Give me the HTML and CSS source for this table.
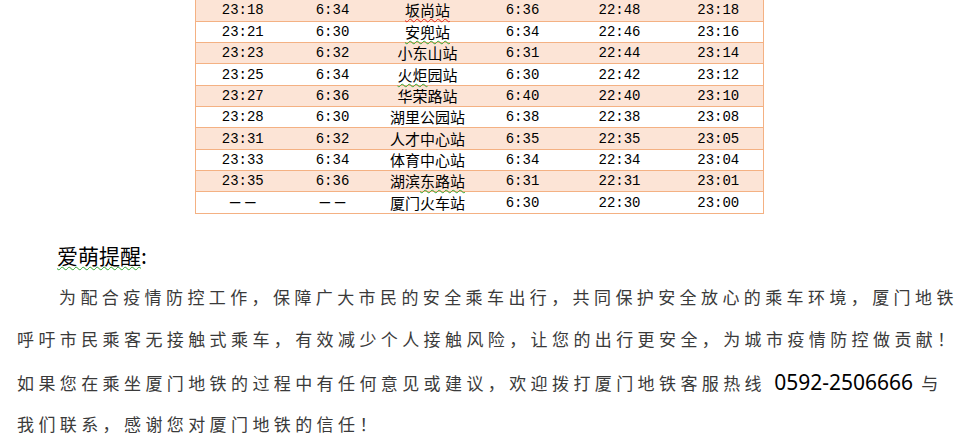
FILE: index.html
```html
<!DOCTYPE html>
<html lang="zh-CN">
<head>
<meta charset="utf-8">
<title>厦门地铁末班车时刻</title>
<link rel="stylesheet" href="styles.css">
</head>
<body>
<div class="page">
  <table class="schedule">
    <colgroup>
      <col class="c1"><col class="c2"><col class="c3"><col class="c4"><col class="c5"><col class="c6">
    </colgroup>
    <tbody>
      <tr class="shade"><td>23:18</td><td>6:34</td><td class="stn"><span class="spell-red">坂尚站</span></td><td>6:36</td><td>22:48</td><td>23:18</td></tr>
      <tr><td>23:21</td><td>6:30</td><td class="stn"><span class="spell-green">安兜站</span></td><td>6:34</td><td>22:46</td><td>23:16</td></tr>
      <tr class="shade"><td>23:23</td><td>6:32</td><td class="stn">小东山站</td><td>6:31</td><td>22:44</td><td>23:14</td></tr>
      <tr><td>23:25</td><td>6:34</td><td class="stn"><span class="spell-green">火炬</span>园站</td><td>6:30</td><td>22:42</td><td>23:12</td></tr>
      <tr class="shade"><td>23:27</td><td>6:36</td><td class="stn">华荣路站</td><td>6:40</td><td>22:40</td><td>23:10</td></tr>
      <tr><td>23:28</td><td>6:30</td><td class="stn">湖里公园站</td><td>6:38</td><td>22:38</td><td>23:08</td></tr>
      <tr class="shade"><td>23:31</td><td>6:32</td><td class="stn">人才中心站</td><td>6:35</td><td>22:35</td><td>23:05</td></tr>
      <tr><td>23:33</td><td>6:34</td><td class="stn">体育中心站</td><td>6:34</td><td>22:34</td><td>23:04</td></tr>
      <tr class="shade"><td>23:35</td><td>6:36</td><td class="stn">湖滨<span class="spell-green">东路站</span></td><td>6:31</td><td>22:31</td><td>23:01</td></tr>
      <tr><td><span class="dash">——</span></td><td><span class="dash">——</span></td><td class="stn">厦门火车站</td><td>6:30</td><td>22:30</td><td>23:00</td></tr>
    </tbody>
  </table>

  <h2 class="tip-title"><span class="spell-green">爱萌提醒</span>:</h2>
  <p class="tip indent">为配合疫情防控工作，保障广大市民的安全乘车出行，共同保护安全放心的乘车环境，厦门地铁<br>呼吁市民乘客无接触式乘车，有效减少个人接触风险，让您的出行更安全，为城市疫情防控做贡献！</p>
  <p class="tip second">如果您在乘坐厦门地铁的过程中有任何意见或建议，欢迎拨打厦门地铁客服热线 <span class="phone">0592-2506666</span> 与<br>我们联系，感谢您对厦门地铁的信任！</p>
</div>
</body>
</html>
```
FILE: styles.css
```css
html, body {
  margin: 0;
  padding: 0;
  background: #ffffff;
}

.page {
  width: 968px;
  height: 448px;
  overflow: hidden;
}

.schedule {
  margin: 0 0 0 195px;
  width: 568px;
  table-layout: fixed;
  border-collapse: collapse;
  border-left: 1px solid #f4b183;
  border-right: 1px solid #f4b183;
  font-family: "Liberation Mono", monospace;
  font-size: 14px;
  color: #000;
}

.c1 { width: 94px; }
.c2 { width: 86px; }
.c3 { width: 104px; }
.c4 { width: 86px; }
.c5 { width: 108px; }
.c6 { width: 90px; }

.schedule tr {
  height: 21.33px;
}

.schedule td {
  padding: 0;
  text-align: center;
  vertical-align: middle;
  border-bottom: 1px solid #f4b183;
  line-height: 18px;
  white-space: nowrap;
}

.schedule tr.shade td {
  background: #fce4d6;
}

.schedule td.stn {
  font-family: "Noto Sans CJK SC", sans-serif;
  font-size: 15px;
}

.dash {
  font-family: "Liberation Mono", monospace;
  font-size: 17px;
  letter-spacing: 5px;
  padding-left: 5px;
}

.spell-red {
  text-decoration: underline wavy #e0261b;
  text-decoration-thickness: 1px;
  text-underline-offset: 2px;
}

.spell-green {
  text-decoration: underline wavy #2fa52f;
  text-decoration-thickness: 1px;
  text-underline-offset: 2px;
}

.tip-title {
  margin: 26px 0 0 57px;
  font-family: "Noto Sans CJK SC", sans-serif;
  font-weight: normal;
  font-size: 21px;
  line-height: 30px;
  color: #000;
}

.tip {
  margin: 0 0 0 17px;
  font-family: "Noto Sans CJK SC", sans-serif;
  font-size: 17px;
  letter-spacing: 4.4px;
  color: #3a3a3a;
  white-space: nowrap;
}

.tip.indent {
  margin-top: 6px;
  line-height: 42px;
  text-indent: 42px;
}

.tip.second {
  margin-top: 2px;
  line-height: 41px;
}

.phone {
  font-family: "Noto Sans", sans-serif;
  font-size: 21px;
  letter-spacing: 0;
  line-height: 1;
  color: #000;
}
```
